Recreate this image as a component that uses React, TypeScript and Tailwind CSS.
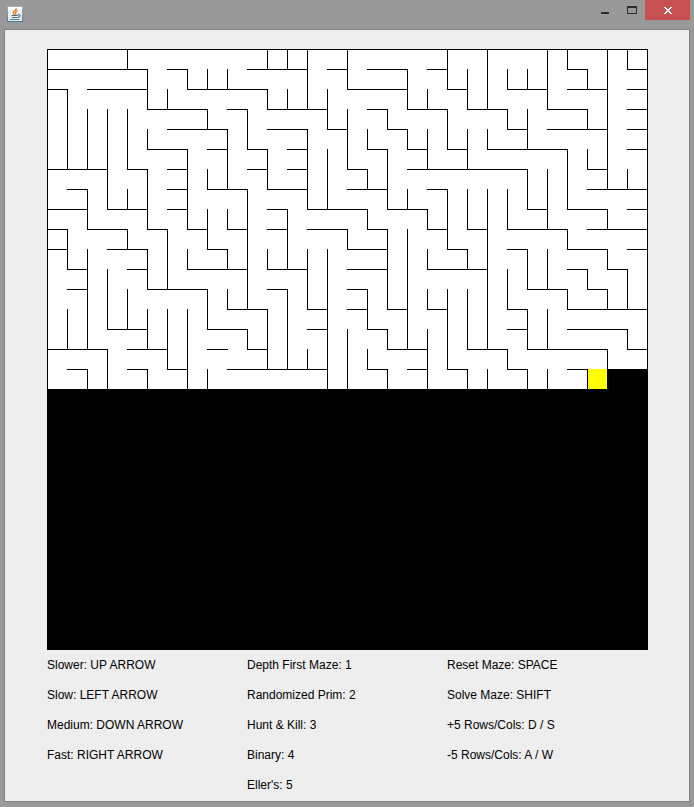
const CELL = 20;
const GRID = 30;

type Span = [number, number];

// Walls lying on each horizontal grid line, as [first column, last column].
const horizontal: Record<number, Span[]> = {
  1: [[0, 5], [6, 7], [10, 13], [14, 15], [16, 18], [19, 20], [26, 27], [29, 30]],
  2: [[0, 1], [2, 5], [7, 11], [15, 18], [20, 21], [23, 25], [26, 28], [29, 30]],
  3: [[5, 8], [9, 10], [11, 14], [16, 17], [18, 20], [21, 23], [25, 27], [29, 30]],
  4: [[6, 9], [11, 13], [14, 15], [17, 18], [23, 24], [25, 28], [29, 30]],
  5: [[5, 7], [8, 9], [10, 11], [12, 13], [16, 17], [18, 19], [20, 21], [22, 26], [29, 30]],
  6: [[0, 3], [4, 5], [6, 7], [10, 11], [12, 13], [15, 16], [18, 24], [27, 28]],
  7: [[1, 2], [6, 7], [8, 10], [11, 13], [15, 17], [19, 20], [27, 30]],
  8: [[0, 2], [3, 5], [6, 7], [11, 12], [13, 16], [17, 19], [24, 25], [26, 28], [29, 30]],
  9: [[0, 1], [2, 4], [5, 6], [7, 8], [9, 10], [11, 12], [13, 15], [16, 17], [19, 20], [21, 22], [23, 26], [27, 30]],
  10: [[0, 1], [3, 5], [8, 9], [15, 17], [20, 21], [23, 24], [26, 28], [29, 30]],
  11: [[1, 2], [4, 5], [7, 10], [11, 13], [15, 17], [19, 22], [26, 27], [28, 29]],
  12: [[1, 2], [5, 8], [11, 12], [15, 16], [24, 26], [27, 28]],
  13: [[9, 11], [13, 14], [15, 16], [17, 18], [19, 20], [23, 24], [26, 30]],
  14: [[3, 5], [8, 10], [13, 14], [16, 17], [23, 24], [26, 29]],
  15: [[0, 3], [4, 6], [8, 9], [10, 11], [17, 19], [21, 23], [24, 28], [29, 30]],
  16: [[1, 2], [4, 5], [6, 7], [9, 14], [16, 17], [18, 19], [20, 21], [23, 24], [26, 27]],
};

// Walls lying on each vertical grid line, as [first row, last row].
const vertical: Record<number, Span[]> = {
  1: [[2, 6], [9, 11], [13, 15]],
  2: [[3, 6], [7, 9], [10, 15], [16, 17]],
  3: [[3, 8], [11, 14], [15, 17]],
  4: [[0, 1], [3, 6], [7, 8], [9, 10], [12, 14]],
  5: [[1, 3], [4, 5], [6, 9], [10, 12], [13, 15], [16, 17]],
  6: [[2, 3], [9, 12], [13, 16]],
  7: [[1, 2], [5, 9], [10, 11], [13, 17]],
  8: [[1, 2], [3, 4], [6, 7], [8, 10], [12, 14], [16, 17]],
  9: [[1, 2], [4, 7], [8, 9], [10, 11], [12, 13]],
  10: [[3, 5], [7, 13], [14, 15]],
  11: [[0, 1], [2, 3], [5, 7], [10, 11], [13, 16]],
  12: [[0, 1], [2, 3], [8, 11], [12, 16]],
  13: [[0, 3], [4, 8], [10, 13], [15, 16]],
  14: [[2, 4], [5, 8], [10, 17]],
  15: [[0, 2], [3, 6], [9, 10], [14, 17]],
  16: [[4, 5], [6, 7], [8, 9], [12, 14], [15, 16]],
  17: [[3, 4], [5, 8], [9, 13], [14, 15], [16, 17]],
  18: [[1, 3], [4, 5], [7, 8], [9, 15]],
  19: [[2, 3], [4, 6], [8, 9], [10, 11], [12, 13], [14, 17]],
  20: [[0, 2], [3, 5], [7, 10], [12, 16]],
  21: [[1, 3], [4, 6], [7, 9], [10, 11], [12, 15], [16, 17]],
  22: [[0, 3], [4, 5], [7, 15], [16, 17]],
  23: [[1, 2], [3, 4], [7, 9], [11, 13], [15, 16]],
  24: [[1, 2], [3, 5], [6, 8], [10, 12], [13, 15], [16, 17]],
  25: [[0, 3], [6, 9], [10, 12], [13, 15], [16, 17]],
  26: [[0, 1], [5, 8], [9, 10], [12, 13]],
  27: [[1, 2], [3, 4], [5, 6], [11, 12], [16, 17]],
  28: [[0, 7], [8, 9], [10, 11], [12, 13], [15, 16]],
  29: [[0, 1], [6, 7], [11, 13], [14, 15]],
};

const helpColumns = [
  ["Slower: UP ARROW", "Slow: LEFT ARROW", "Medium: DOWN ARROW", "Fast: RIGHT ARROW"],
  ["Depth First Maze: 1", "Randomized Prim: 2", "Hunt & Kill: 3", "Binary: 4", "Eller's: 5"],
  ["Reset Maze: SPACE", "Solve Maze: SHIFT", "+5 Rows/Cols: D / S", "-5 Rows/Cols: A / W"],
];

function Maze() {
  const size = GRID * CELL + 1;
  return (
    <svg viewBox={`0 0 ${size} ${size}`} className="block w-full" shapeRendering="crispEdges" role="img" aria-label="Maze">
      <rect width={size} height={size} fill="#000" />
      <rect x={1} y={1} width={size - 2} height={16 * CELL - 1} fill="#fff" />
      <rect x={1} y={16 * CELL} width={27 * CELL} height={CELL} fill="#fff" />
      <rect x={27 * CELL + 1} y={16 * CELL} width={CELL - 1} height={CELL} fill="#ff0" />
      {Object.entries(horizontal).map(([row, spans]) =>
        spans.map(([a, b]) => (
          <rect key={`h${row}-${a}`} x={a * CELL} y={Number(row) * CELL} width={(b - a) * CELL + 1} height={1} />
        )),
      )}
      {Object.entries(vertical).map(([col, spans]) =>
        spans.map(([a, b]) => (
          <rect key={`v${col}-${a}`} x={Number(col) * CELL} y={a * CELL} width={1} height={(b - a) * CELL + 1} />
        )),
      )}
    </svg>
  );
}

function JavaIcon() {
  return (
    <svg viewBox="0 0 16 16" className="mt-[6px] ml-[7px] size-4" aria-hidden="true">
      <defs>
        <linearGradient id="tile" x1="0" y1="0" x2="0" y2="1">
          <stop offset="0" stopColor="#a9b4bd" />
          <stop offset="1" stopColor="#4f7389" />
        </linearGradient>
        <linearGradient id="face" x1="0" y1="0" x2="0" y2="1">
          <stop offset="0" stopColor="#ffffff" />
          <stop offset="1" stopColor="#dfe5ea" />
        </linearGradient>
      </defs>
      <rect width="16" height="16" rx="1" fill="url(#tile)" />
      <rect x="1" y="1" width="14" height="14" fill="url(#face)" />
      <path d="M9.300 2.300C9.600 4.300 6 5 6.200 6.700c.1 1 1.200 1.300 1.300 2.300" fill="none" stroke="#e8761c" strokeWidth="1.400" />
      <path d="M11 4.500C9 5.300 8 6 8.700 7c.6.700.2 1.300-.4 1.900" fill="none" stroke="#e8761c" strokeWidth="1.300" />
      <path d="M4.500 9h6.500v1H4.500zM5 11h5.500v1H5z" fill="#4a6f8c" />
      <path d="M11 8.700c2.800-.5 2.600 2.300 0 2.700" fill="none" stroke="#4a6f8c" strokeWidth="1.100" />
      <path d="M3 13h9.500v1H3z" fill="#5f8099" />
    </svg>
  );
}

function TitleBar() {
  return (
    <header className="flex h-[29px] items-start justify-between">
      <JavaIcon />
      <div className="flex pr-1">
        <button type="button" aria-label="Minimize" className="h-5 w-[27px]">
          <svg viewBox="0 0 27 20" className="block h-5 w-full" shapeRendering="crispEdges">
            <rect x="10" y="12" width="8" height="2" fill="#2b2b2b" />
          </svg>
        </button>
        <button type="button" aria-label="Maximize" className="h-5 w-[27px]">
          <svg viewBox="0 0 27 20" className="block h-5 w-full" shapeRendering="crispEdges">
            <path d="M9 6h10v8H9zM10 8v5h8V8z" fill="#2b2b2b" fillRule="evenodd" />
          </svg>
        </button>
        <button type="button" aria-label="Close" className="h-5 w-[45px] bg-[#c75050]">
          <svg viewBox="0 0 45 20" className="block h-5 w-full" shapeRendering="crispEdges">
            <path
              d="M19 7h2v1h1v1h2V8h1V7h2v1h-1v1h-1v1h-1v1h1v1h1v1h1v1h-2v-1h-1v-1h-2v1h-1v1h-2v-1h1v-1h1v-1h1v-1h-1V9h-1V8h-1z"
              fill="#fff"
            />
          </svg>
        </button>
      </div>
    </header>
  );
}

export default function App() {
  return (
    <div className="flex min-h-screen flex-col bg-[#999999] font-['Liberation_Sans',Arial,sans-serif] text-xs text-black">
      <TitleBar />
      <main className="mx-1 mb-[5px] flex-1 border border-[#838383] bg-[#eeeeee] pt-[19px]">
        <div className="pr-[41px] pl-[42px]">
          <Maze />
        </div>
        <div className="grid grid-cols-3 px-[42px] pb-px">
          {helpColumns.map((lines) => (
            <ul key={lines[0]}>
              {lines.map((line) => (
                <li key={line} className="leading-[30px]">
                  {line}
                </li>
              ))}
            </ul>
          ))}
        </div>
      </main>
    </div>
  );
}
